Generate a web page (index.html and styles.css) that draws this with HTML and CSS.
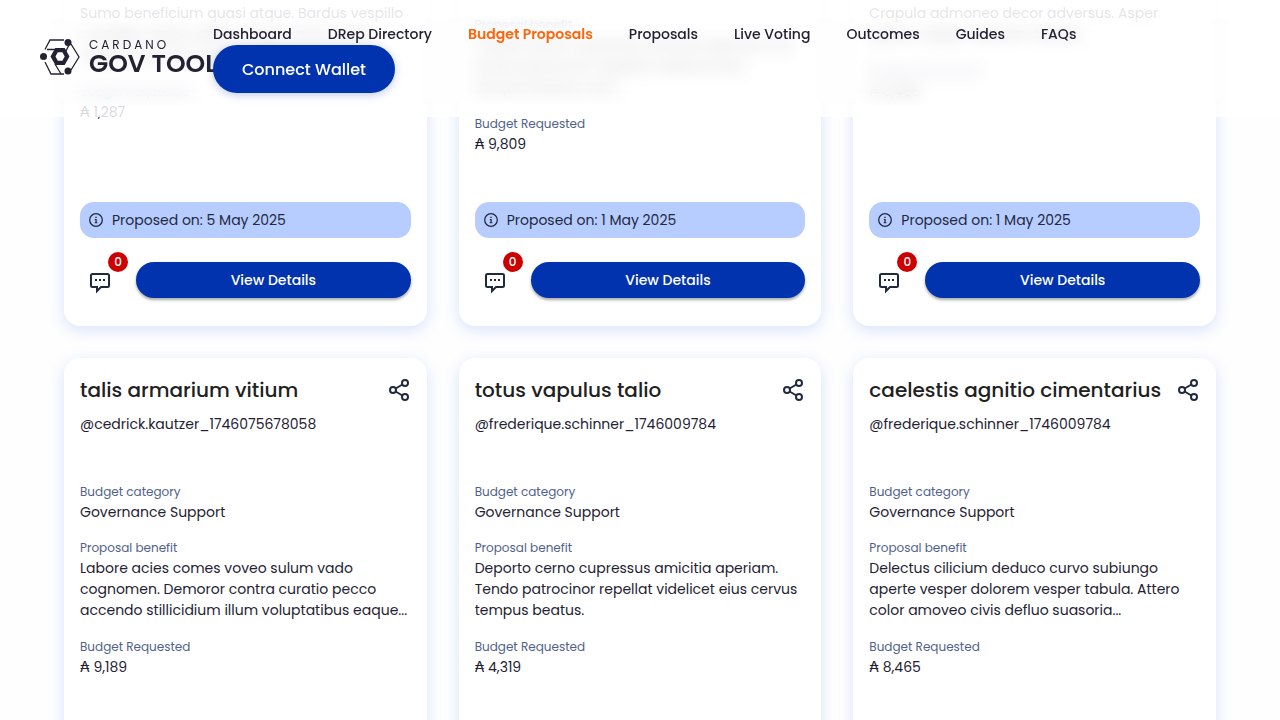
FILE: index.html
```html
<!DOCTYPE html>
<html lang="en">
<head>
<meta charset="utf-8">
<title>Budget Proposals</title>
<link rel="stylesheet" href="styles.css">
</head>
<body>
<svg class="sprite" aria-hidden="true">
  <symbol id="share" viewBox="0 0 24 24"><g fill="none" stroke="#212A3D" stroke-width="2"><circle cx="18" cy="5" r="3"/><circle cx="6" cy="12" r="3"/><circle cx="18" cy="19" r="3"/><path d="M8.600 10.500l6.800-4M8.600 13.500l6.800 4"/></g></symbol>
  <symbol id="chat" viewBox="0 0 24 24"><path d="M4.500 4H19.500Q21 4 21 5.500V15.500Q21 17 19.500 17H13L9 21V17H4.500Q3 17 3 15.500V5.500Q3 4 4.500 4Z" fill="none" stroke="#212A3D" stroke-width="2"/><path d="M7 9h2v2H7zM11 9h2v2h-2zM15 9h2v2h-2z" fill="#212A3D"/></symbol>
  <symbol id="info" viewBox="0 0 16 16"><circle cx="8" cy="8" r="6.300" fill="none" stroke="#212A3D" stroke-width="1.300"/><path d="M7.300 4.800h1.400v1.200H7.300zM6.800 7h1.900v3.300h.7v.9H6.700v-.9h.7V7.900h-.6z" fill="#212A3D"/></symbol>
</svg>
<header class="topbar">
  <a class="logo" href="#" aria-label="Cardano Gov Tool">
    <svg class="logo-mark" viewBox="0 0 40 36" aria-hidden="true">
      <path d="M24 1H10L5 10.500M7 10.500H16M5 23l6 12h13M15 25l6 10M31 5l8 13-8 13M29 6l-4 8" fill="none" stroke="#242232" stroke-width="1.300"/>
      <g fill="#242232"><circle cx="28" cy="3.500" r="3.500"/><circle cx="3.500" cy="17.500" r="3.500"/><circle cx="28" cy="32" r="3.500"/></g>
      <path d="M10.500 17.500L15.300 9h9.400l4.800 8.500-4.800 8.500h-9.400zM15.500 17.500l2.300 4.200h4.600l2.300-4.200-2.300-4.200h-4.600z" fill="#242232" fill-rule="evenodd"/>
    </svg>
    <span class="logo-text"><span class="logo-small">CARDANO</span><span class="logo-big">GOV TOOL</span></span>
  </a>
  <div class="actions">
    <nav class="nav">
      <a href="#">Dashboard</a><a href="#">DRep Directory</a><a class="active" href="#">Budget Proposals</a><a href="#">Proposals</a><a href="#">Live Voting</a><a href="#">Outcomes</a><a href="#">Guides</a><a href="#">FAQs</a>
    </nav>
    <button class="connect" type="button">Connect Wallet</button>
  </div>
</header>
<main class="grid">
  <article class="card">
    <div class="head"><h2>tres arbor</h2><button class="icon" type="button" aria-label="Share"><svg><use href="#share"/></svg></button></div>
    <p class="author">@cedrick.kautzer_1746075678058</p>
    <dl>
      <dt>Budget category</dt><dd>Governance Support</dd>
      <dt>Proposal benefit</dt><dd class="benefit">Sumo beneficium quasi atque. Bardus vespillo<br>combibo vesica adhuc tergo causa velum<br>angulus decens victus.</dd>
      <dt>Budget Requested</dt><dd>₳ 1,287</dd>
    </dl>
    <p class="date"><svg><use href="#info"/></svg>Proposed on: 5 May 2025</p>
    <div class="foot"><button class="icon comments" type="button" aria-label="Comments"><svg><use href="#chat"/></svg><span class="badge">0</span></button><button class="details" type="button">View Details</button></div>
  </article>
  <article class="card">
    <div class="head"><h2>frederique totus<br>vapulus</h2><button class="icon" type="button" aria-label="Share"><svg><use href="#share"/></svg></button></div>
    <p class="author">@frederique.schinner_1746009784</p>
    <dl>
      <dt>Budget category</dt><dd>Governance Support</dd>
      <dt>Proposal benefit</dt><dd class="benefit">Tardus cerno cupressus amicitia aperiam vel<br>tendo patrocinor repellat videlicet eius<br>tempus beatus vero.</dd>
      <dt>Budget Requested</dt><dd>₳ 9,809</dd>
    </dl>
    <p class="date"><svg><use href="#info"/></svg>Proposed on: 1 May 2025</p>
    <div class="foot"><button class="icon comments" type="button" aria-label="Comments"><svg><use href="#chat"/></svg><span class="badge">0</span></button><button class="details" type="button">View Details</button></div>
  </article>
  <article class="card">
    <div class="head"><h2>curvo subiungo</h2><button class="icon" type="button" aria-label="Share"><svg><use href="#share"/></svg></button></div>
    <p class="author">@frederique.schinner_1746009784</p>
    <dl>
      <dt>Budget category</dt><dd>Governance Support</dd>
      <dt>Proposal benefit</dt><dd class="benefit">Crapula admoneo decor adversus. Asper<br>aperte vesper dolorem tabula.</dd>
      <dt>Budget Requested</dt><dd>₳ 8,465</dd>
    </dl>
    <p class="date"><svg><use href="#info"/></svg>Proposed on: 1 May 2025</p>
    <div class="foot"><button class="icon comments" type="button" aria-label="Comments"><svg><use href="#chat"/></svg><span class="badge">0</span></button><button class="details" type="button">View Details</button></div>
  </article>
  <article class="card">
    <div class="head"><h2>talis armarium vitium</h2><button class="icon" type="button" aria-label="Share"><svg><use href="#share"/></svg></button></div>
    <p class="author">@cedrick.kautzer_1746075678058</p>
    <dl>
      <dt>Budget category</dt><dd>Governance Support</dd>
      <dt>Proposal benefit</dt><dd class="benefit">Labore acies comes voveo sulum vado<br>cognomen. Demoror contra curatio pecco<br>accendo stillicidium illum voluptatibus eaque...</dd>
      <dt>Budget Requested</dt><dd>₳ 9,189</dd>
    </dl>
  </article>
  <article class="card">
    <div class="head"><h2>totus vapulus talio</h2><button class="icon" type="button" aria-label="Share"><svg><use href="#share"/></svg></button></div>
    <p class="author">@frederique.schinner_1746009784</p>
    <dl>
      <dt>Budget category</dt><dd>Governance Support</dd>
      <dt>Proposal benefit</dt><dd class="benefit">Deporto cerno cupressus amicitia aperiam.<br>Tendo patrocinor repellat videlicet eius cervus<br>tempus beatus.</dd>
      <dt>Budget Requested</dt><dd>₳ 4,319</dd>
    </dl>
  </article>
  <article class="card">
    <div class="head"><h2>caelestis agnitio cimentarius</h2><button class="icon" type="button" aria-label="Share"><svg><use href="#share"/></svg></button></div>
    <p class="author">@frederique.schinner_1746009784</p>
    <dl>
      <dt>Budget category</dt><dd>Governance Support</dd>
      <dt>Proposal benefit</dt><dd class="benefit">Delectus cilicium deduco curvo subiungo<br>aperte vesper dolorem vesper tabula. Attero<br>color amoveo civis defluo suasoria...</dd>
      <dt>Budget Requested</dt><dd>₳ 8,465</dd>
    </dl>
  </article>
</main>
</body>
</html>
```
FILE: styles.css
```css
* { box-sizing: border-box; }
body {
  margin: 0;
  height: 100vh;
  overflow: hidden;
  background: #fefeff;
  color: #242232;
  font: 400 14px/21px Poppins, Inter, "Noto Sans", sans-serif;
}
button { font: inherit; border: 0; padding: 0; cursor: pointer; }
a { color: inherit; text-decoration: none; }
p, h2, dl, dd { margin: 0; }
.sprite { position: absolute; width: 0; height: 0; }

.topbar {
  position: fixed;
  inset: 0 0 auto;
  z-index: 2;
  display: flex;
  align-items: center;
  padding: 24px 40px;
  background: rgba(255, 255, 255, .76);
}
/* blurs what scrolls under the middle of the bar */
.topbar::before {
  content: "";
  position: absolute;
  inset: 18px 0 12px;
  z-index: -1;
  backdrop-filter: blur(8px);
}
.topbar::after {
  content: "";
  position: absolute;
  inset: 0;
  z-index: -1;
  background: linear-gradient(rgba(255, 255, 255, .5) 18px, transparent 22px calc(100% - 16px), rgba(255, 255, 255, .3) calc(100% - 12px));
}
.logo { display: flex; align-items: center; gap: 9px; width: 173px; flex: none; padding-bottom: 4px; }
.logo-mark { width: 40px; height: 36px; flex: none; }
.logo-text { display: flex; flex-direction: column; white-space: nowrap; }
.logo-small { font-size: 12px; line-height: 14px; letter-spacing: 3px; }
.logo-big { font-size: 25px; line-height: 24px; font-weight: 600; }
.actions { position: relative; min-width: 0; }
.nav { display: flex; gap: 36px; font-weight: 500; white-space: nowrap; }
.nav .active { color: #ff640a; font-weight: 600; }
.connect {
  display: block;
  height: 48px;
  padding: 0 29px;
  border-radius: 24px;
  background: #0033ad;
  color: #fff;
  font-size: 16px;
  font-weight: 500;
  box-shadow: 0 2px 8px rgba(0, 51, 173, .25);
}

.grid {
  display: grid;
  grid-template-columns: repeat(3, minmax(0, 1fr));
  grid-auto-rows: 523px;
  gap: 32px;
  padding: 0 64px;
  margin-top: -197px;
}
.card {
  display: flex;
  flex-direction: column;
  padding: 16px 16px 28px;
  border-radius: 16px;
  background: #fff;
  box-shadow: 0 4px 15px rgba(47, 98, 220, .18);
}
.head { display: flex; justify-content: space-between; align-items: flex-start; }
h2 { font-size: 20px; line-height: 32px; font-weight: 500; color: #212121; white-space: nowrap; }
.icon { background: none; line-height: 0; }
.icon svg { width: 24px; height: 24px; }
.head .icon { padding-top: 4px; }
.author { margin: 8px 0 48px; }
dt { font-size: 12px; line-height: 18px; margin-bottom: 1px; color: #506288; }
dd { margin-bottom: 16px; white-space: nowrap; }
.benefit { margin-bottom: 17px; }
.date {
  display: flex;
  align-items: center;
  gap: 8px;
  height: 36px;
  margin: auto 0 24px;
  padding: 0 8px;
  border-radius: 14px;
  background: #b8cdff;
  color: #212a3d;
}
.date svg { width: 16px; height: 16px; }
.foot { display: flex; gap: 16px; }
.comments { position: relative; width: 40px; padding-top: 4px; }
.badge {
  position: absolute;
  top: -10px;
  right: -8px;
  width: 20px;
  height: 20px;
  border-radius: 50%;
  background: #cc0000;
  color: #fff;
  font-size: 12px;
  line-height: 20px;
  font-weight: 500;
}
.details {
  flex: 1;
  height: 36px;
  border-radius: 18px;
  background: #0033ad;
  color: #fff;
  font-weight: 500;
  box-shadow: 0 2px 3px rgba(0, 0, 0, .35);
}
```
